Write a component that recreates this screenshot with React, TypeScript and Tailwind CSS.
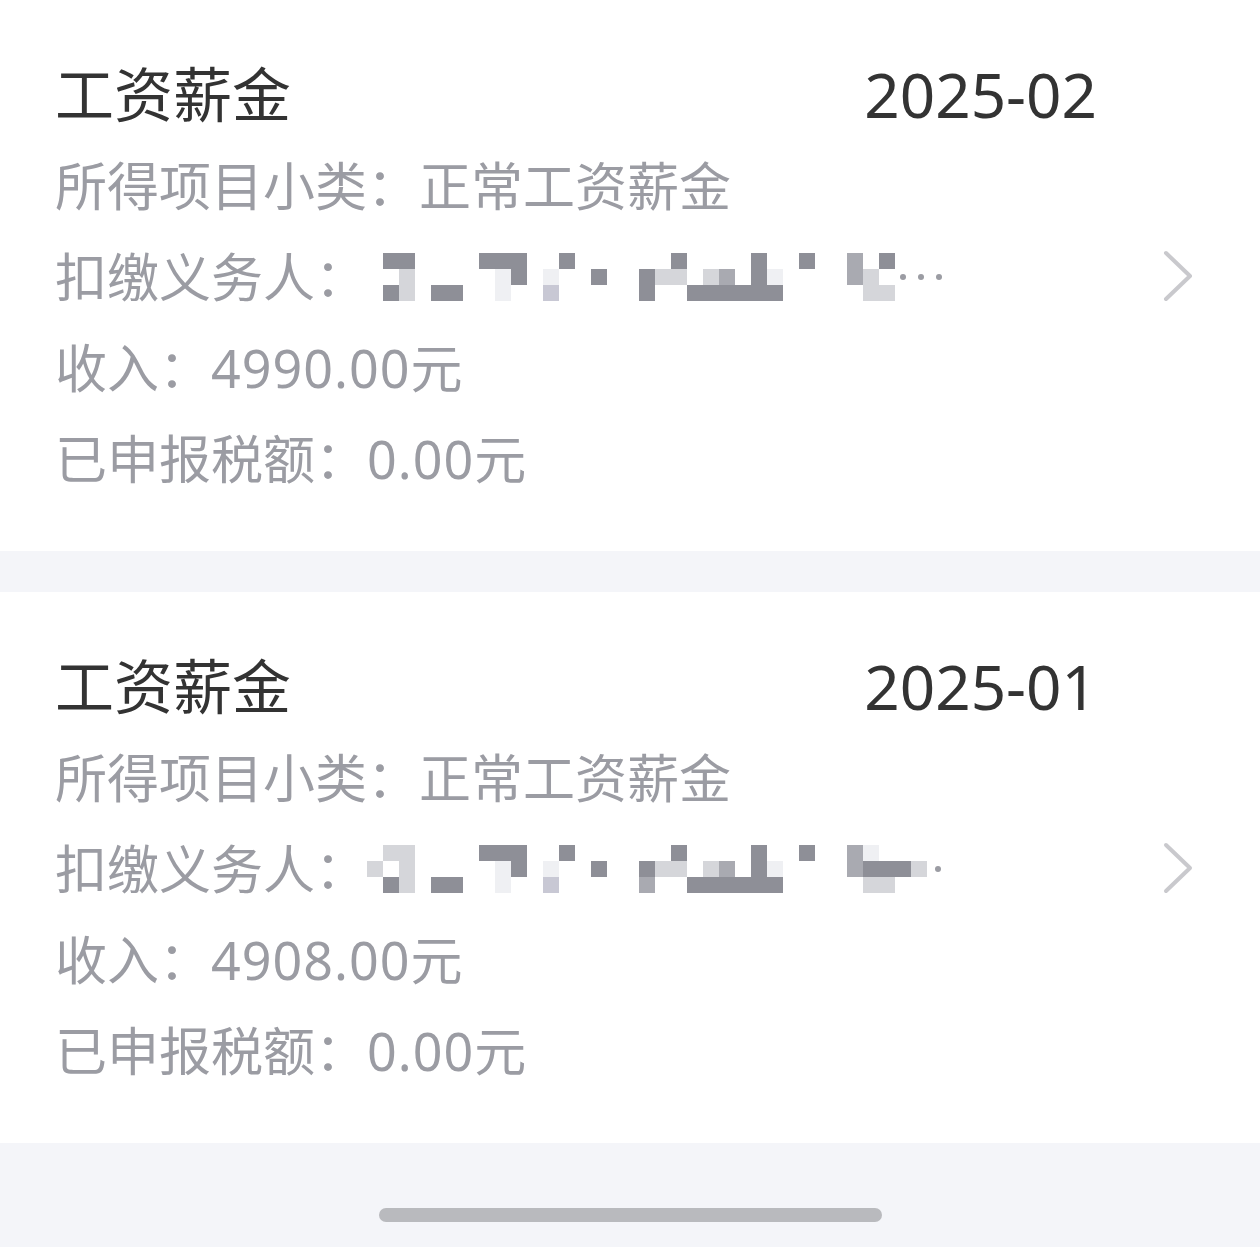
import React from 'react';

type Record = {
  month: string;
  income: string;
  mosaic: string[];
  dots: number;
};

// pixelated (masked) withholding agent name, one string per 16px row
const records: Record[] = [
  {
    month: '2025-02',
    income: '4990.00',
    mosaic: [
      '.DD....DDD..D......D....D..D..M.D',
      '..L.....VD.V..D..DLL.LM.DV....ML.',
      '.DL.DD..V..P.....D..DDDDDD.....LL',
    ],
    dots: 3,
  },
  {
    month: '2025-01',
    income: '4908.00',
    mosaic: [
      '.LL....DDD..D......D....D..D..MV...',
      'L.L.....VD.V..D..DLL.LM.DV....MDDDL',
      '.DL.DD..V..P.....M..DDDDDD.....LL..',
    ],
    dots: 1,
  },
];

const cellColor: { [k: string]: string } = {
  D: 'bg-[#8e8f97]',
  M: 'bg-[#a9aab1]',
  L: 'bg-[#d5d6da]',
  V: 'bg-[#eff0f3]',
  P: 'bg-[#c8c8d4]',
  '.': '',
};

function Mosaic({ rows, dots }: { rows: string[]; dots: number }) {
  return (
    <div className="flex items-center">
      <div className="flex flex-col">
        {rows.map((row, r) => (
          <div key={r} className="flex">
            {row.split('').map((c, i) => (
              <div key={i} className={`w-4 h-4 ${cellColor[c]}`} />
            ))}
          </div>
        ))}
      </div>
      <div className={`flex gap-[12px] ${dots === 3 ? 'ml-[5px]' : 'ml-[8px]'}`}>
        {Array.from({ length: dots }).map((_, i) => (
          <div key={i} className="w-[6px] h-[6px] rounded-full bg-[#9b9ca3]" />
        ))}
      </div>
    </div>
  );
}

function Card({ rec }: { rec: Record }) {
  return (
    <div className="bg-white h-[551px] flex items-start">
      <div className="w-[1097px] pl-[55px] pt-[48px]">
        {/* Title */}
        <div className="h-[92px] flex items-center justify-between text-[#333333] leading-none">
          <span className="text-[59px]">工资薪金</span>
          <span className="text-[62px]">{rec.month}</span>
        </div>

        {/* Details */}
        <div className="text-[52px] text-[#9b9ca3] leading-none whitespace-nowrap">
          <div className="h-[91px] flex items-center">所得项目小类：正常工资薪金</div>
          <div className="h-[91px] flex items-center">
            <span className="w-[312px] shrink-0">扣缴义务人：</span>
            <Mosaic rows={rec.mosaic} dots={rec.dots} />
          </div>
          <div className="h-[91px] flex items-center">
            收入：<span className="tracking-[1px]">{rec.income}</span>元
          </div>
          <div className="h-[91px] flex items-center">
            已申报税额：<span className="tracking-[1px]">0.00</span>元
          </div>
        </div>
      </div>

      <svg
        className="self-center ml-[66px]"
        width="30"
        height="52"
        viewBox="0 0 30 52"
        fill="none"
      >
        <path
          d="M3 3 L27 26 L3 49"
          stroke="#c9c9cd"
          strokeWidth="4"
          strokeLinecap="round"
          strokeLinejoin="round"
        />
      </svg>
    </div>
  );
}

export default function App() {
  return (
    <div className="w-[1260px] min-h-[1247px] bg-[#f4f5f9] font-['Noto_Sans','Noto_Sans_CJK_SC',sans-serif]">
      <Card rec={records[0]} />
      <div className="h-[41px]" />
      <Card rec={records[1]} />

      {/* Home indicator */}
      <div className="pt-[65px] flex justify-center">
        <div className="w-[503px] h-[14px] rounded-full bg-[#b9babe]" />
      </div>
    </div>
  );
}
